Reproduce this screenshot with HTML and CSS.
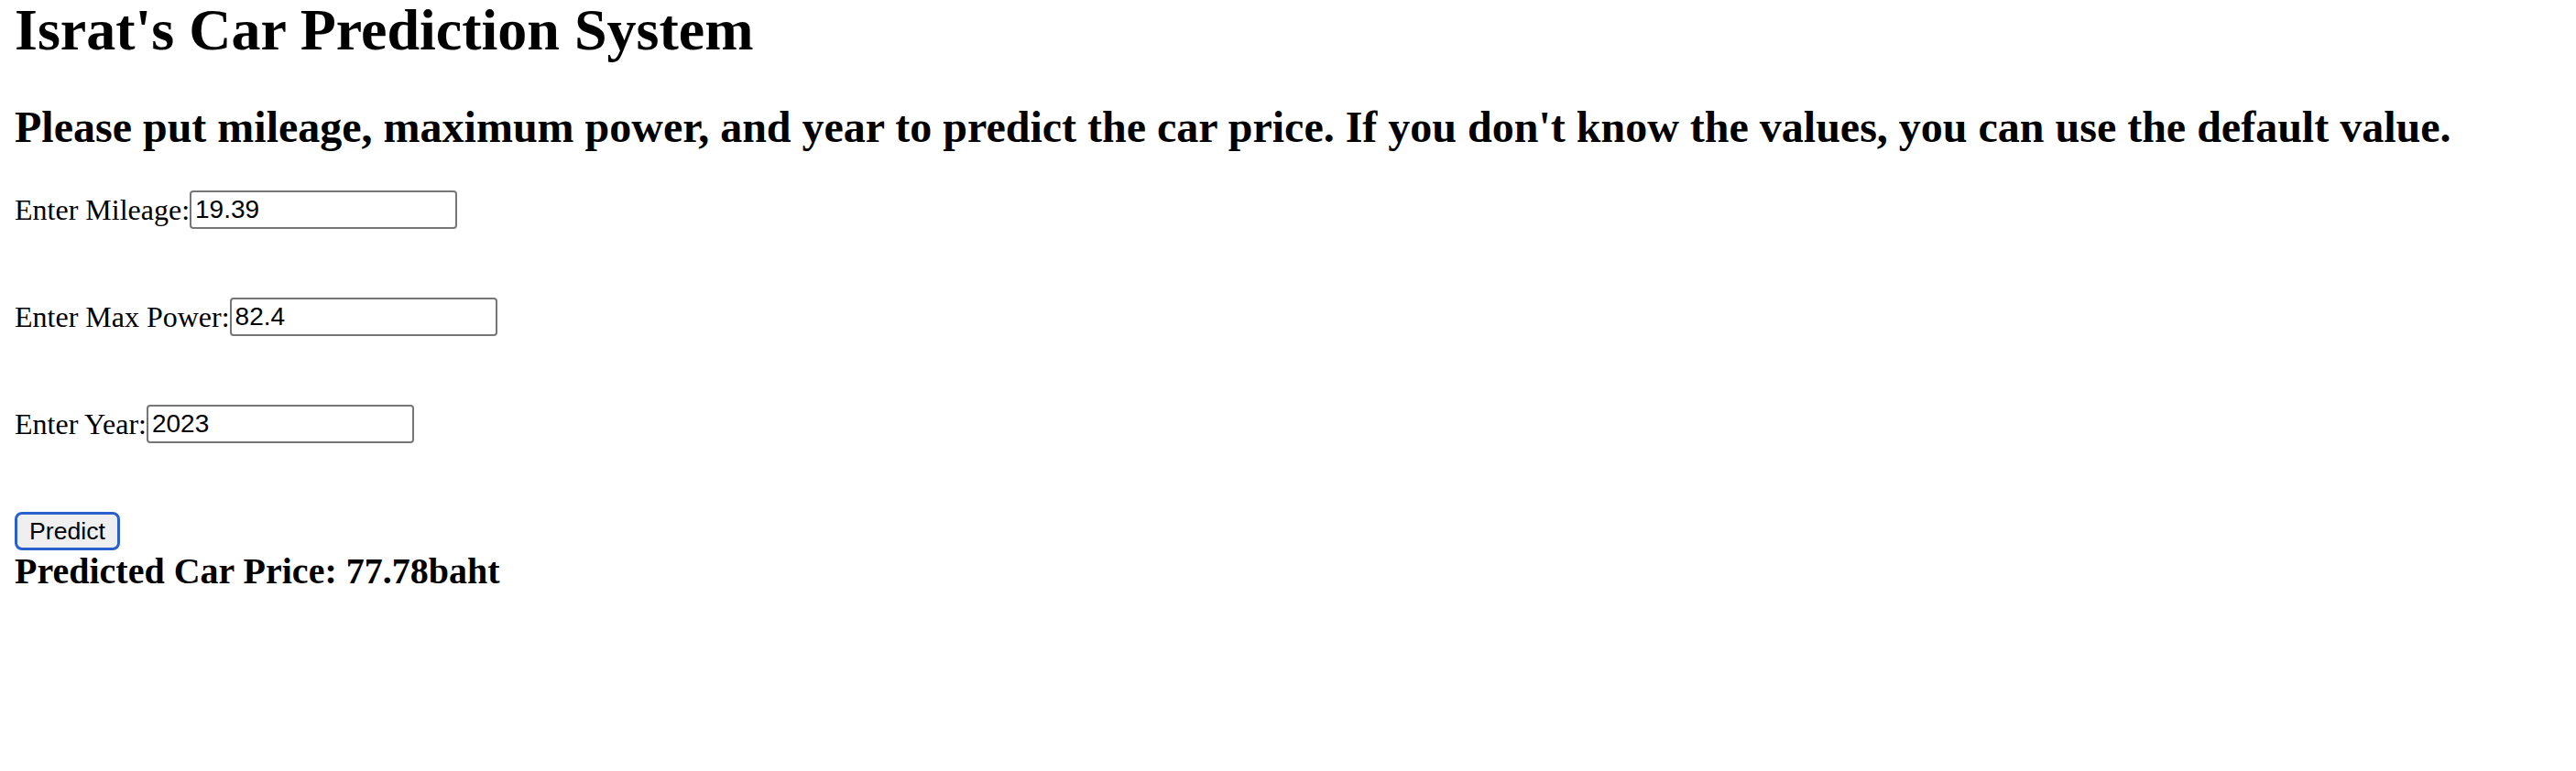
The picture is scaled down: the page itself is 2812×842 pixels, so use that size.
FILE: index.html
```html
<!DOCTYPE html>
<html lang="en">
<head>
<meta charset="utf-8">
<title>Israt's Car Prediction System</title>
<link rel="stylesheet" href="styles.css">
</head>
<body>
<h1 class="title">Israt's Car Prediction System</h1>
<h2 class="subtitle">Please put mileage, maximum power, and year to predict the car price. If you don't know the values, you can use the default value.</h2>
<form class="form">
  <div class="row"><label class="label" for="mileage">Enter Mileage:</label><input class="field" id="mileage" type="text" value="19.39"></div>
  <div class="row"><label class="label" for="power">Enter Max Power:</label><input class="field" id="power" type="text" value="82.4"></div>
  <div class="row"><label class="label" for="year">Enter Year:</label><input class="field" id="year" type="text" value="2023"></div>
  <div class="row"><button class="btn" type="button">Predict</button></div>
</form>
<div class="result">Predicted Car Price: 77.78baht</div>
</body>
</html>
```
FILE: styles.css
```css
html, body {
  background: #ffffff;
}
body {
  margin: 0 16px;
  font-family: "Liberation Serif", "Times New Roman", serif;
  color: #000000;
}
.title {
  margin: 0;
  font-size: 64px;
  line-height: 65px;
  font-weight: bold;
  white-space: nowrap;
}
.subtitle {
  margin: 46px 0 0;
  font-size: 48px;
  line-height: 56px;
  font-weight: bold;
  white-space: nowrap;
}
.form {
  margin: 41px 0 0;
  display: flex;
  flex-direction: column;
  gap: 75px;
}
.row {
  display: flex;
  align-items: center;
  height: 42px;
}
.label {
  font-size: 32px;
  line-height: 42px;
  white-space: nowrap;
}
.field {
  box-sizing: border-box;
  width: 292px;
  height: 42px;
  margin: 0;
  padding: 0 4px;
  border: 2px solid #767676;
  border-radius: 4px;
  font-family: "Liberation Sans", Arial, sans-serif;
  font-size: 28px;
  color: #000000;
  background: #ffffff;
}
.btn {
  box-sizing: border-box;
  height: 42px;
  margin: 0;
  padding: 0 13px;
  border: 3px solid #2b5fcc;
  border-radius: 8px;
  background: #efefef;
  font-family: "Liberation Sans", Arial, sans-serif;
  font-size: 26.67px;
  color: #000000;
}
.result {
  margin: 1px 0 0;
  font-size: 40px;
  line-height: 44px;
  font-weight: bold;
  white-space: nowrap;
}
```
